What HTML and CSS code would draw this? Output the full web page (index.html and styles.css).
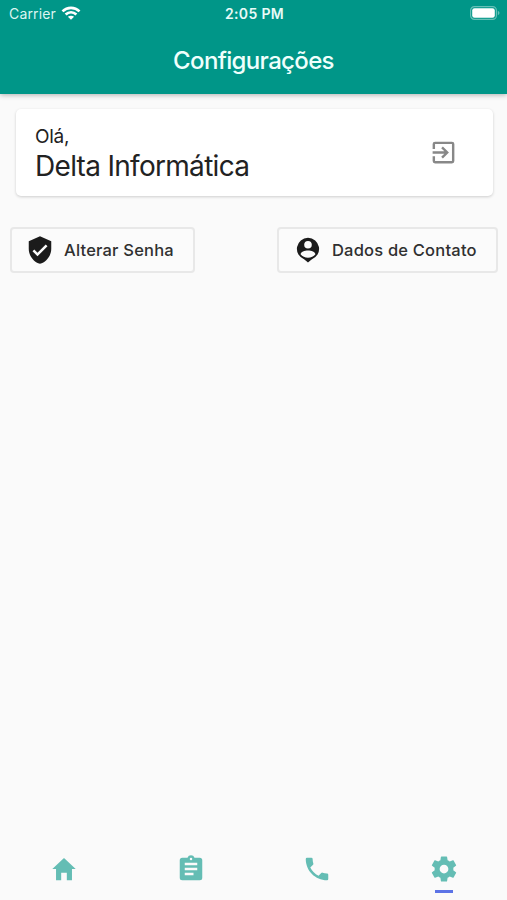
FILE: index.html
```html
<!DOCTYPE html>
<html lang="pt-BR">
<head>
<meta charset="utf-8">
<title>Configurações</title>
<link rel="stylesheet" href="styles.css">
</head>
<body>
<header class="header">
  <div class="status">
    <div class="carrier"><span>Carrier</span>
      <svg width="20" height="14" viewBox="0 0 20 14" fill="none" stroke="#fff" stroke-width="2.7"><path d="M1.5 5.4C6.3.8 13.7.8 18.5 5.4M4.6 8.5c3.2-2.9 7.6-2.9 10.8 0"/><path d="M10 13.8 6.9 10.8c1.8-1.5 4.4-1.5 6.2 0z" fill="#fff" stroke="none"/></svg>
    </div>
    <div class="time">2:05 PM</div>
    <svg class="battery" width="30" height="14" viewBox="0 0 30 14"><rect x=".6" y=".6" width="25.8" height="12.8" rx="3.8" fill="none" stroke="#fff" stroke-opacity=".4" stroke-width="1.2"/><rect x="2.2" y="2.2" width="22.6" height="9.6" rx="2.3" fill="#fff"/><path d="M27.8 4.8c2.2.8 2.2 3.6 0 4.4z" fill="#fff" fill-opacity=".4"/></svg>
  </div>
  <h1 class="title">Configurações</h1>
</header>
<main class="content">
  <section class="card">
    <div>
      <p class="hello">Olá,</p>
      <p class="name">Delta Informática</p>
    </div>
    <svg class="exit" viewBox="0 0 24 24"><path d="M10.09 15.59 11.5 17l5-5-5-5-1.41 1.41L12.67 11H3v2h9.67zM19 3H5a2 2 0 0 0-2 2v4h2V5h14v14H5v-4H3v4a2 2 0 0 0 2 2h14a2 2 0 0 0 2-2V5a2 2 0 0 0-2-2z"/></svg>
  </section>
  <div class="actions">
    <button class="button password"><svg viewBox="0 0 24 24"><path d="M12 1 3 5v6c0 5.55 3.84 10.74 9 12 5.16-1.26 9-6.45 9-12V5zm-2 16-4-4 1.41-1.41L10 14.17l6.59-6.59L18 9z"/></svg><span>Alterar Senha</span></button>
    <button class="button contact"><svg viewBox="0 0 30 30"><path fill-rule="evenodd" d="M15 2.8a11.1 11.1 0 0 0-3.6 21.6L15 27.5l3.6-3.1A11.1 11.1 0 0 0 15 2.8zm0 3.1a3.8 3.8 0 1 1 0 7.6 3.8 3.8 0 0 1 0-7.6zm0 9.6c3.4 0 7.4 1.5 7.4 3.7-1.6 2.2-4.4 3.5-7.4 3.5s-5.8-1.3-7.4-3.5c0-2.2 4-3.7 7.4-3.7z"/></svg><span>Dados de Contato</span></button>
  </div>
</main>
<nav class="tabs">
  <a class="tab"><svg viewBox="0 0 512 512"><path d="M208 448V320h96v128h88V256h64L256 68 56 256h64v192z"/></svg></a>
  <a class="tab"><svg viewBox="0 0 24 24"><path d="M19 3h-4.18a3 3 0 0 0-5.64 0H5a2 2 0 0 0-2 2v14a2 2 0 0 0 2 2h14a2 2 0 0 0 2-2V5a2 2 0 0 0-2-2zm-7 0a1 1 0 1 1 0 2 1 1 0 0 1 0-2zm2 14H7v-2h7zm3-4H7v-2h10zm0-4H7V7h10z"/></svg></a>
  <a class="tab"><svg viewBox="0 0 24 24"><path d="M6.62 10.79a15.15 15.15 0 0 0 6.59 6.59l2.2-2.2a1 1 0 0 1 1.02-.24c1.12.37 2.33.57 3.57.57a1 1 0 0 1 1 1V20a1 1 0 0 1-1 1C10.61 21 3 13.39 3 4a1 1 0 0 1 1-1h3.5a1 1 0 0 1 1 1c0 1.25.2 2.45.57 3.57a1 1 0 0 1-.25 1.02z"/></svg></a>
  <a class="tab active"><svg viewBox="0 0 24 24"><path d="M19.43 12.98c.04-.32.07-.64.07-.98s-.03-.66-.07-.98l2.11-1.65c.19-.15.24-.42.12-.64l-2-3.46c-.12-.22-.39-.3-.61-.22l-2.49 1c-.52-.4-1.08-.73-1.69-.98l-.38-2.65C14.46 2.18 14.25 2 14 2h-4c-.25 0-.46.18-.49.42l-.38 2.65c-.61.25-1.17.59-1.69.98l-2.49-1c-.23-.09-.49 0-.61.22l-2 3.46c-.13.22-.07.49.12.64l2.11 1.65c-.04.32-.07.65-.07.98s.03.66.07.98l-2.11 1.65c-.19.15-.24.42-.12.64l2 3.46c.12.22.39.3.61.22l2.49-1c.52.4 1.08.73 1.69.98l.38 2.65c.03.24.24.42.49.42h4c.25 0 .46-.18.49-.42l.38-2.65c.61-.25 1.17-.59 1.69-.98l2.49 1c.23.09.49 0 .61-.22l2-3.46c.12-.22.07-.49-.12-.64zM12 15.5a3.5 3.5 0 1 1 0-7 3.5 3.5 0 0 1 0 7z"/></svg></a>
</nav>
</body>
</html>
```
FILE: styles.css
```css
* { box-sizing: border-box; }
body {
  margin: 0;
  height: 900px;
  display: flex;
  flex-direction: column;
  background: #fafafa;
  color: #222;
  font-family: Inter, "Liberation Sans", sans-serif;
  overflow: hidden;
}
p, h1 { margin: 0; font-weight: 400; }
svg { display: block; flex: none; }
.header {
  height: 94px;
  flex: none;
  background: #009688;
  color: #fff;
  box-shadow: 0 1px 5px rgba(0, 0, 0, .3);
}
.status {
  height: 27px;
  padding: 0 7px 0 9px;
  display: grid;
  grid-template-columns: 1fr auto 1fr;
  align-items: center;
  font-size: 14px;
  line-height: 27px;
}
.carrier { display: flex; align-items: center; gap: 5px; color: #dcf5f1; letter-spacing: .15px; }
.carrier svg { margin-top: -2px; }
.time { font-weight: 600; color: #e8faf7; letter-spacing: .35px; }
.battery { justify-self: end; margin-top: -1px; }
.title {
  height: 67px;
  text-align: center;
  line-height: 67px;
  font-size: 24px;
  font-weight: 500;
  color: #effffc;
  letter-spacing: -.65px;
}
.content { flex: 1; padding: 15px 9px 0 10px; }
.card {
  height: 87px;
  margin: 0 5px 0 6px;
  padding: 15px 35px 0 19px;
  display: flex;
  justify-content: space-between;
  background: #fff;
  border-radius: 5px;
  box-shadow: 0 1px 3px rgba(0, 0, 0, .18);
}
.hello { font-size: 19px; line-height: 25px; letter-spacing: -.3px; }
.name { font-size: 28px; line-height: 35px; letter-spacing: -.7px; }
.exit { width: 29px; height: 29px; margin-top: 14px; fill: #888; }
.actions { display: flex; justify-content: space-between; margin-top: 31px; }
.button {
  height: 46px;
  padding: 0 0 0 14px;
  display: flex;
  align-items: center;
  gap: 9px;
  border: 2px solid #e8e8e8;
  border-radius: 4px;
  background: #fbfbfb;
  color: #303030;
  font: 500 16.5px Inter, sans-serif;
  letter-spacing: .2px;
  white-space: nowrap;
}
.button svg { width: 30px; height: 30px; fill: #1b1b1b; }
.password { width: 185px; padding-left: 13px; }
.contact { width: 221px; }
.tabs { height: 61px; flex: none; display: grid; grid-template-columns: repeat(4, 1fr); }
.tab { display: flex; flex-direction: column; align-items: center; padding: 15px 0 0 1px; }
.tab svg { width: 30px; height: 30px; fill: #64bdb4; }
.active { padding-left: 0; }
.active::after { content: ""; width: 18px; height: 3px; margin-top: 6px; background: #5c73e6; }
```
